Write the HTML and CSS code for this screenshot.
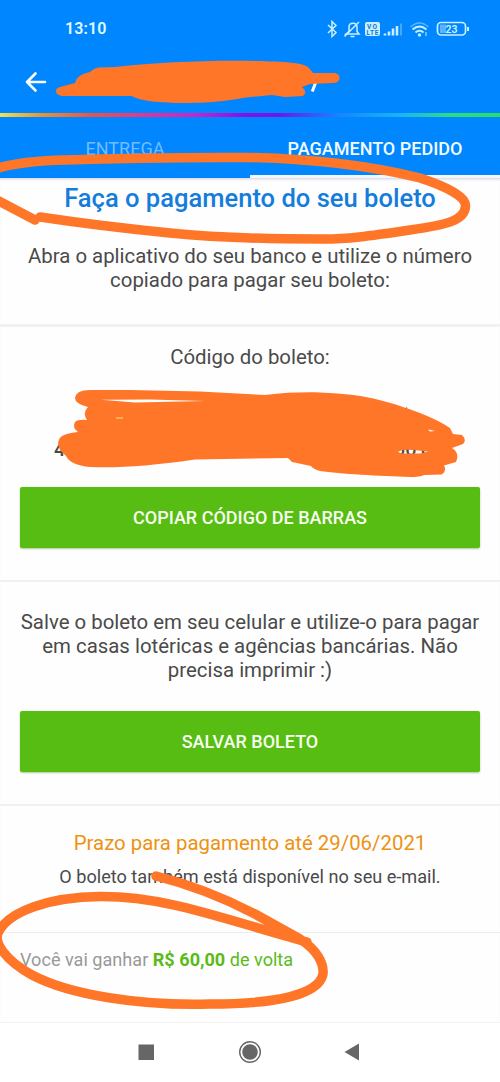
FILE: index.html
```
<!DOCTYPE html>
<html lang="pt-BR">
<head>
<meta charset="utf-8">
<title>Pagamento pedido</title>
<link rel="stylesheet" href="styles.css">
</head>
<body>
<div class="screen">
  <header class="header">
    <div class="status">
      <span class="clock">13:10</span>
      <svg class="status-icons" width="146" height="24" viewBox="0 0 146 24" fill="none" stroke="#c9f0ff" stroke-width="1.5">
        <path d="M3 8l8 7.500-4 4V4.500l4 4-8 7.500"/>
        <path d="M21 17h13l-2-2.500V10c0-5-8-5-8 0v4.500zM25.500 19.500h4M34 5L19.500 19.500"/>
        <rect x="40" y="5" width="15" height="14" rx="2" fill="#c9f0ff" stroke="none"/>
        <text class="tiny" x="42" y="11.500" textLength="10">VO</text>
        <text class="tiny" x="41.500" y="18" textLength="12">LTE</text>
        <path d="M60 18.500v-2M64 18.500v-4M68 18.500v-7M72 18.500v-9.500" stroke-width="2.600"/>
        <path d="M76 18.500V6.500" stroke-width="1.500" opacity=".45"/>
        <path d="M85.500 10q9-8 18 0" opacity=".45"/>
        <path d="M87.500 12.500q7-6 14 0M90.500 15.500q4-3.500 8 0" stroke-width="2"/>
        <circle cx="94.500" cy="18" r="1.700" fill="#c9f0ff" stroke="none"/>
        <path d="M101 15v4" stroke-width="1"/>
        <rect x="112.500" y="5.500" width="28" height="12.500" rx="3.500" stroke-width="1.700"/>
        <rect x="115" y="7.500" width="6" height="8.500" fill="#58b4ff" stroke="none"/>
        <path d="M143 10v4" stroke-width="2"/>
        <text class="level" x="126.500" y="15.500">23</text>
      </svg>
    </div>
    <div class="toolbar">
      <svg width="22" height="22" viewBox="0 0 22 22" fill="none" stroke="#fff" stroke-width="2.600" stroke-linecap="round" stroke-linejoin="round"><path d="M20 11H2M10.500 2.500L2 11l8.500 8.500"/></svg>
    </div>
  </header>
  <div class="rainbow"></div>
  <nav class="tabs">
    <div class="tab"><span>ENTREGA</span></div>
    <div class="tab active"><span>PAGAMENTO PEDIDO</span></div>
  </nav>
  <main class="content">
    <section class="intro">
      <h1>Faça o pagamento do seu boleto</h1>
      <p class="text intro-text">Abra o aplicativo do seu banco e utilize o número<br>copiado para pagar seu boleto:</p>
    </section>
    <section class="code">
      <p class="text">Código do boleto:</p>
      <div class="digits"><span>4</span><span>001</span></div>
      <div class="button"><span>COPIAR CÓDIGO DE BARRAS</span></div>
    </section>
    <section class="save">
      <p class="text">Salve o boleto em seu celular e utilize-o para pagar<br>em casas lotéricas e agências bancárias. Não<br>precisa imprimir :)</p>
      <div class="button"><span>SALVAR BOLETO</span></div>
    </section>
    <section class="deadline">
      <p class="due">Prazo para pagamento até 29/06/2021</p>
      <p class="mail">O boleto também está disponível no seu e-mail.</p>
    </section>
    <section class="cashback"><p>Você vai ganhar <span class="green"><b>R$ 60,00</b> de volta</span></p></section>
  </main>
  <footer class="navbar">
    <svg width="24" height="24" viewBox="0 0 24 24"><rect x="4.500" y="4.500" width="15.500" height="15.500" fill="#666"/></svg>
    <svg width="24" height="24" viewBox="0 0 24 24"><circle cx="13" cy="12" r="10.300" fill="none" stroke="#666" stroke-width="1.400"/><circle cx="13" cy="12" r="7.800" fill="#666"/></svg>
    <svg width="24" height="24" viewBox="0 0 24 24"><path d="M4.500 12L19 3.500v17z" fill="#666"/></svg>
  </footer>
  <svg class="marks" width="500" height="1082" viewBox="0 0 500 1082" fill="#ff7629">
    <path d="M315.800 82L312.300 91.500" stroke="#fff" stroke-width="3"/>
    <path d="M60 87L75 83Q76 75 90 72Q94 68 98 67.500L115 67C160 62 210 60 260 61C290 62 304 63 309 68L313 73L335 73Q340 74 339.500 79Q338 83 333 83L310 84L302 87Q308 92 303 96L285 97L272 95L250 97C230 100 215 103 185 103C160 103 140 101 132 96L62 96Q56 95 56 91Q56 88 60 87Z"/>
    <path d="M404 410L407 407L407.500 411Z" fill="#4a4a4a"/>
    <path fill-rule="evenodd" d="M75 398Q76 390 90 390L130 390L200 391.500L265 395C285 392.500 305 392 320 392.500C370 394 395 404 420 413Q440 421 450 428L453 434L462 435Q467 440 463 444L452 448Q460 453 456 462L444 465.500Q447 471 442 474.500L424 475Q420 477 410 477C380 476 340 474 320 471Q313 469 311 466L292 462L288 458L225 459L195 459.500C150 466 120 468 90 467Q70 465 66 456L60 450Q57 443 59 440Q60 434 78 432Q72 428 75 422Q78 419 87 420Q82 413 88 407Q75 404 75 398ZM101 399.800L150 399.500L205 401L135 402.500ZM398 452Q402 449 413 450L428 451.500L420 453.500L402 453.500ZM428 429.500L435 431L430 431.500Z"/>
    <path d="M116 418h7" stroke="#ffc65c" stroke-width="1.500"/>
    <g class="rings">
      <path d="M-5 169Q20 161 65 160Q150 157 250 157.500C320 159 375 167 420 178C448 187 465 197 465.500 205C466 221 445 225 410 230C370 236 345 239.500 320 239C250 239 200 236 170 233Q100 226 40 217"/>
      <path d="M-5 199L35 220"/>
      <path d="M156 876C200 887 230 901 255 914L300 939C317 950 324 963 323 974C319 995 275 1004 210 1004C140 1006 70 995 32 975C5 960-6 943-2 933C8 911 50 897 100 896.500C165 896 220 918 307 942"/>
    </g>
  </svg>
</div>
</body>
</html>
```
FILE: styles.css
```
* { box-sizing: border-box; }
body { margin: 0; background: #fefefe; font-family: Roboto, "Liberation Sans", sans-serif; color: #4a4a4a; }
h1, p { margin: 0; }
.screen { position: relative; width: 500px; height: 1082px; display: flex; flex-direction: column; overflow: hidden; white-space: nowrap; }
.header { height: 113px; background: #0086ff; color: #fff; }
.status { display: flex; justify-content: space-between; padding: 17px 29px 0 65px; height: 57px; }
.clock { font-size: 16px; line-height: 24px; font-weight: 600; letter-spacing: .1px; color: #e0fbff; }
.status-icons { flex: none; }
.tiny { font-size: 6.500px; font-weight: 700; fill: #0878d8; stroke: none; }
.level { font-size: 10.500px; font-weight: 600; fill: #d5f5ff; stroke: none; text-anchor: middle; }
.toolbar { padding: 14px 0 0 25px; }
.rainbow { height: 4px; background: linear-gradient(90deg, #e9e35c 0, #e2983c 8%, #e4574a 18%, #df349b 30%, #c528c8 39%, #8011e8 49%, #6d18eb 56%, #1686ff 68%, #19b5f5 80%, #2edb84 90%, #2bdc67 100%); }
.tabs { height: 61px; display: flex; background: #0086ff; font-size: 18px; }
.tab { flex: 1; text-align: center; padding-top: 20px; line-height: 24px; color: #72bdff; }
.tab.active { color: #f2fcff; font-weight: 500; border-bottom: 3px solid #f3f7fa; }
.content { flex: 1; text-align: center; box-shadow: inset 0 3px 3px -2px #ccd; }
.intro { height: 149px; padding-top: 4px; border-bottom: 3px solid #f1f1f1; }
h1 { font-size: 25.550px; line-height: 32px; font-weight: 500; color: #147ddb; }
.text { font-size: 20.400px; line-height: 24px; }
.intro-text { padding-top: 30px; }
.code { height: 255px; padding: 18px 20px 0; border-bottom: 2px solid #f1f1f1; }
.digits { height: 91px; margin-top: 27px; padding: 41px 52px 0 34px; display: flex; justify-content: space-between; font-size: 20px; line-height: 24px; font-weight: 500; }
.button { height: 61px; display: flex; align-items: center; justify-content: center; background: #57bd12; color: #f6fff0; font-size: 18px; font-weight: 500; border-radius: 2px; box-shadow: 0 1px 2px #a9c998; }
.save { height: 224px; padding: 28px 20px 0; border-bottom: 2px solid #f1f1f1; }
.save .button { margin-top: 29px; }
.deadline { height: 127px; padding-top: 25px; border-bottom: 1px solid #ececec; }
.due { font-size: 20.400px; line-height: 24px; color: #ed9212; }
.mail { margin-top: 10px; font-size: 18.130px; line-height: 24px; }
.cashback { text-align: left; padding: 15px 20px; font-size: 18.100px; line-height: 24px; color: #999; }
.green { color: #5abb18; }
.navbar { height: 60px; border-top: 1px solid #f3f3f3; padding: 0 136px 2px 134px; display: flex; justify-content: space-between; align-items: center; background: #fff; }
.marks { position: absolute; left: 0; top: 0; }
.rings { fill: none; stroke: #ff7629; stroke-width: 9.500; stroke-linecap: round; stroke-linejoin: round; }
```
